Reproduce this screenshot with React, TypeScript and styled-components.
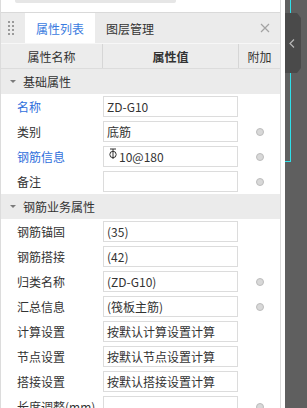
import styled, { createGlobalStyle } from "styled-components";

const GlobalStyle = createGlobalStyle`
  html, body {
    margin: 0;
    padding: 0;
    overflow: hidden;
    background: #ffffff;
  }
  body {
    font-family: "Noto Sans CJK SC", "Noto Sans", sans-serif;
    font-size: 12px;
    color: #333333;
  }
`;

type Row = {
  label: string;
  value: string;
  link?: boolean;
  extra?: boolean;
  rebar?: boolean;
};

type Group = { title: string; rows: Row[] };

const groups: Group[] = [
  {
    title: "基础属性",
    rows: [
      { label: "名称", value: "ZD-G10", link: true },
      { label: "类别", value: "底筋", extra: true },
      { label: "钢筋信息", value: "10@180", link: true, extra: true, rebar: true },
      { label: "备注", value: "", extra: true },
    ],
  },
  {
    title: "钢筋业务属性",
    rows: [
      { label: "钢筋锚固", value: "(35)" },
      { label: "钢筋搭接", value: "(42)" },
      { label: "归类名称", value: "(ZD-G10)", extra: true },
      { label: "汇总信息", value: "(筏板主筋)", extra: true },
      { label: "计算设置", value: "按默认计算设置计算" },
      { label: "节点设置", value: "按默认节点设置计算" },
      { label: "搭接设置", value: "按默认搭接设置计算" },
      { label: "长度调整(mm)", value: "", extra: true },
    ],
  },
];

function RebarMark() {
  return (
    <RebarSvg width="10" height="11" viewBox="0 0 10 11">
      <line x1="2" y1="1" x2="8" y2="1" stroke="#333" strokeWidth="1" />
      <circle cx="5" cy="6.5" r="3.2" fill="none" stroke="#333" strokeWidth="1" />
      <line x1="5" y1="1" x2="5" y2="11" stroke="#333" strokeWidth="1" />
    </RebarSvg>
  );
}

function App() {
  return (
    <>
      <GlobalStyle />
      <Page>
        <Side>
          <Panel>
            <TopStrip>
              <ScrollThumb />
            </TopStrip>
            <TabBar>
              <Grip>
                {Array.from({ length: 8 }).map((_, i) => (
                  <Dot key={i} />
                ))}
              </Grip>
              <Tab $active>属性列表</Tab>
              <Tab>图层管理</Tab>
              <CloseButton>
                <svg width="10" height="10" viewBox="0 0 10 10">
                  <path d="M1 1 L9 9 M9 1 L1 9" stroke="#a3a3a3" strokeWidth="1.2" />
                </svg>
              </CloseButton>
            </TabBar>
            <HeaderRow>
              <HeaderCell>属性名称</HeaderCell>
              <HeaderCell $bold>属性值</HeaderCell>
              <HeaderCell $last>附加</HeaderCell>
            </HeaderRow>
            {groups.map((g) => (
              <div key={g.title}>
                <GroupRow>
                  <Caret />
                  <span>{g.title}</span>
                </GroupRow>
                {g.rows.map((r) => (
                  <DataRow key={r.label}>
                    <Label $link={r.link}>{r.label}</Label>
                    <ValueBox>
                      {r.rebar && <RebarMark />}
                      {r.value}
                    </ValueBox>
                    <ExtraCell>{r.extra && <Radio />}</ExtraCell>
                  </DataRow>
                ))}
              </div>
            ))}
          </Panel>
        </Side>
        <Canvas>
          <SelectBox />
          <Handle>
            <svg width="6" height="9" viewBox="0 0 6 9">
              <polyline points="5,0.5 1,4.5 5,8.5" fill="none" stroke="#b8b8b8" strokeWidth="1.2" />
            </svg>
          </Handle>
        </Canvas>
      </Page>
    </>
  );
}

export default App;

const Page = styled.div`
  display: flex;
  width: 307px;
  height: 408px;
  overflow: hidden;
`;

const Side = styled.div`
  flex: none;
  width: 285px;
  padding-right: 4px;
  box-sizing: border-box;
  background: #ffffff;
`;

const Panel = styled.div`
  width: 281px;
  height: 100%;
  box-sizing: border-box;
  border-left: 1px solid #dcdcdc;
  border-right: 1px solid #dcdcdc;
`;

const TopStrip = styled.div`
  height: 12px;
  padding-left: 14px;
  border-bottom: 1px solid #d9d9d9;
  background: #ffffff;
`;

const ScrollThumb = styled.div`
  width: 161px;
  height: 3px;
  background: #e6e6e6;
  border-radius: 0 0 2px 2px;
`;

const TabBar = styled.div`
  display: flex;
  align-items: stretch;
  height: 30px;
  background: #ebebeb;
  border-bottom: 1px solid #f7f7f7;
`;

const Grip = styled.div`
  display: grid;
  grid-template-columns: 2px 2px;
  grid-auto-rows: 2px;
  column-gap: 2px;
  row-gap: 2px;
  align-content: center;
  padding-left: 7px;
  width: 24px;
  box-sizing: border-box;
`;

const Dot = styled.span`
  background: #9a9a9a;
`;

const Tab = styled.div<{ $active?: boolean }>`
  display: flex;
  align-items: center;
  padding: 0 11px;
  font-size: 12px;
  color: ${(p) => (p.$active ? "#3a7be0" : "#333333")};
  background: ${(p) => (p.$active ? "#ffffff" : "transparent")};
`;

const CloseButton = styled.div`
  margin-left: auto;
  display: flex;
  align-items: center;
  padding-right: 10px;
`;

const HeaderRow = styled.div`
  display: grid;
  grid-template-columns: 102px 136px 1fr;
  height: 24px;
  background: #ececec;
  border-bottom: 1px solid #dcdcdc;
`;

const HeaderCell = styled.div<{ $bold?: boolean; $last?: boolean }>`
  display: flex;
  align-items: center;
  justify-content: center;
  font-size: 12px;
  font-weight: ${(p) => (p.$bold ? 700 : 400)};
  color: #333333;
  border-right: ${(p) => (p.$last ? "none" : "1px solid #d6d6d6")};
`;

const GroupRow = styled.div`
  display: flex;
  align-items: center;
  height: 25px;
  background: #ebebeb;
  font-size: 12px;
  color: #333333;
`;

const Caret = styled.span`
  width: 0;
  height: 0;
  margin: 0 7px 0 9px;
  border-left: 3px solid transparent;
  border-right: 3px solid transparent;
  border-top: 3px solid #7a7a7a;
`;

const DataRow = styled.div`
  display: grid;
  grid-template-columns: 102px 136px 1fr;
  height: 25px;
  align-items: center;
  background: #ffffff;
`;

const Label = styled.div<{ $link?: boolean }>`
  padding-left: 16px;
  font-size: 12px;
  white-space: nowrap;
  color: ${(p) => (p.$link ? "#2f6fdc" : "#333333")};
`;

const ValueBox = styled.div`
  display: flex;
  align-items: center;
  width: 135px;
  height: 21px;
  box-sizing: border-box;
  padding-left: 3px;
  border: 1px solid #dcdcdc;
  background: #ffffff;
  font-size: 12px;
  color: #333333;
  white-space: nowrap;
  overflow: hidden;
`;

const RebarSvg = styled.svg`
  flex: none;
  margin: -6px 1px 0 1px;
`;

const ExtraCell = styled.div`
  display: flex;
  justify-content: center;
  align-items: center;
`;

const Radio = styled.span`
  width: 6px;
  height: 6px;
  border-radius: 50%;
  background: #d8d8d8;
  border: 1px solid #bcbcbc;
`;

const Canvas = styled.div`
  position: relative;
  flex: 1;
  background: #5f5f5f;
  overflow: hidden;
`;

const SelectBox = styled.div`
  position: absolute;
  left: -40px;
  top: -2px;
  width: 46px;
  height: 164px;
  box-sizing: border-box;
  border: 1px solid #2fe0ea;
`;

const Handle = styled.div`
  position: absolute;
  left: 0;
  top: 13px;
  width: 16px;
  height: 60px;
  display: flex;
  align-items: center;
  justify-content: center;
  padding-right: 2px;
  box-sizing: border-box;
  background: #4a4a4a;
  clip-path: polygon(0 0, 12px 0, 16px 5px, 16px 55px, 12px 60px, 0 60px);
`;
